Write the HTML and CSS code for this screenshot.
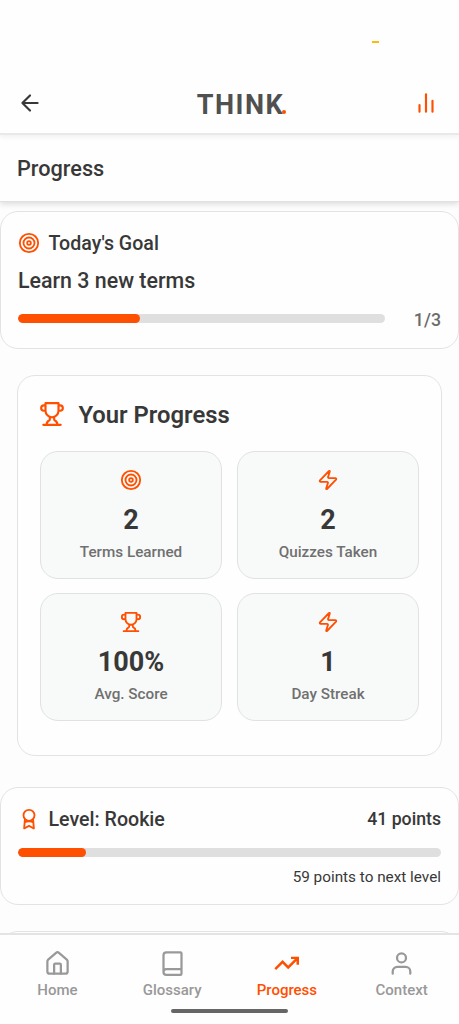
FILE: index.html
```html
<!DOCTYPE html>
<html lang="en">
<head>
<meta charset="utf-8">
<meta name="viewport" content="width=device-width, initial-scale=1">
<title>Progress</title>
<link rel="stylesheet" href="styles.css">
</head>
<body>
<svg class="defs" aria-hidden="true">
  <symbol id="target" viewBox="0 0 24 24"><circle cx="12" cy="12" r="10"/><circle cx="12" cy="12" r="6"/><circle cx="12" cy="12" r="2"/></symbol>
  <symbol id="trophy" viewBox="0 0 24 24"><path d="M6 9H4.500a2.500 2.500 0 0 1 0-5H6M18 9h1.500a2.500 2.500 0 0 0 0-5H18M4 22h16M10 14.660V17c0 .550-.470.980-.970 1.210C7.850 18.750 7 20.240 7 22M14 14.660V17c0 .550.470.980.970 1.210C16.150 18.750 17 20.240 17 22M18 2H6v7a6 6 0 0 0 12 0V2Z"/></symbol>
  <symbol id="zap" viewBox="0 0 24 24"><path d="M4 14a1 1 0 0 1-.78-1.630l9.900-10.200a.5.5 0 0 1 .860.460l-1.920 6.020A1 1 0 0 0 13 10h7a1 1 0 0 1 .780 1.630l-9.900 10.200a.5.5 0 0 1-.860-.460l1.920-6.020A1 1 0 0 0 11 14z"/></symbol>
  <symbol id="award" viewBox="0 0 24 24"><circle cx="12" cy="8" r="6"/><path d="M7.500 12.500L6.700 22.300l5.300-2.800 5.300 2.800-.8-9.800M7.500 15.500c2-1.400 7-1.400 9 0"/></symbol>
</svg>
<div class="screen">
  <header class="topbar">
    <svg class="icon back" viewBox="0 0 24 24"><path d="M12 19l-7-7 7-7M19 12H5"/></svg>
    <div class="logo">THINK<span class="logo-dot"></span></div>
    <svg class="icon chart" viewBox="0 0 24 24"><path d="M18 20V10M12 20V4M6 20v-6"/></svg>
    <span class="status-mark"></span>
  </header>
  <div class="subheader"><h1>Progress</h1></div>
  <main class="content">
    <section class="card goal">
      <h2 class="card-title"><svg class="icon"><use href="#target"/></svg><span>Today's Goal</span></h2>
      <p class="goal-text">Learn 3 new terms</p>
      <div class="goal-progress">
        <div class="track"><div class="fill" style="width:33.33%"></div></div>
        <span class="count">1/3</span>
      </div>
    </section>
    <section class="card overview">
      <h2 class="overview-title"><svg class="icon"><use href="#trophy"/></svg><span>Your Progress</span></h2>
      <div class="stats">
        <div class="stat"><svg class="icon"><use href="#target"/></svg><strong>2</strong><span>Terms Learned</span></div>
        <div class="stat"><svg class="icon"><use href="#zap"/></svg><strong>2</strong><span>Quizzes Taken</span></div>
        <div class="stat"><svg class="icon"><use href="#trophy"/></svg><strong>100%</strong><span>Avg. Score</span></div>
        <div class="stat"><svg class="icon"><use href="#zap"/></svg><strong>1</strong><span>Day Streak</span></div>
      </div>
    </section>
    <section class="card level">
      <div class="level-head">
        <h2 class="card-title"><svg class="icon"><use href="#award"/></svg><span>Level: Rookie</span></h2>
        <span class="points">41 points</span>
      </div>
      <div class="track"><div class="fill" style="width:16%"></div></div>
      <p class="next">59 points to next level</p>
    </section>
    <section class="card upcoming"></section>
  </main>
  <nav class="tabs">
    <a class="tab"><svg class="icon" viewBox="0 0 24 24"><path d="M15 21v-8a1 1 0 0 0-1-1h-4a1 1 0 0 0-1 1v8"/><path d="M3 10a2 2 0 0 1 .709-1.528l7-6a2 2 0 0 1 2.582 0l7 6A2 2 0 0 1 21 10v9a2 2 0 0 1-2 2H5a2 2 0 0 1-2-2z"/></svg><span>Home</span></a>
    <a class="tab"><svg class="icon" viewBox="0 0 24 24"><path d="M4 19.500v-15A2.500 2.500 0 0 1 6.500 2H19a1 1 0 0 1 1 1v18a1 1 0 0 1-1 1H6.500a2.500 2.500 0 0 1 0-5H20"/></svg><span>Glossary</span></a>
    <a class="tab active"><svg class="icon trend" viewBox="0 0 24 24"><path d="M22 7l-8.500 8.500-5-5L2 17M16 7h6v6"/></svg><span>Progress</span></a>
    <a class="tab"><svg class="icon" viewBox="0 0 24 24"><circle cx="12" cy="7" r="4"/><path d="M4.200 21v-2a4 4 0 0 1 4-4h7.600a4 4 0 0 1 4 4v2"/></svg><span>Context</span></a>
    <span class="home-indicator"></span>
  </nav>
</div>
</body>
</html>
```

FILE: styles.css
```css
* { box-sizing: border-box; }
body { margin: 0; font-family: Roboto, "Liberation Sans", sans-serif; color: #383838; background: #fdfdfd; }
h1, h2, p { margin: 0; font-weight: 500; }
.defs { display: none; }
.icon { width: 22px; height: 22px; flex: none; fill: none; stroke: currentColor; stroke-width: 2; stroke-linecap: round; stroke-linejoin: round; }
.screen { height: 1024px; display: flex; flex-direction: column; overflow: hidden; }
.topbar { position: relative; z-index: 2; flex: none; height: 135px; padding: 73px 20px 0 17px; display: grid; grid-template-columns: 26px 1fr 26px; align-items: center; background: #fefefe; border-bottom: 2px solid #e9e9e9; box-shadow: 0 2px 5px rgba(0,0,0,.06); }
.topbar .icon { width: 26px; height: 26px; }
.topbar .chart { color: #ff4f00; }
.logo { justify-self: center; display: flex; align-items: baseline; margin: 3px 0 0 27px; font-size: 27px; font-weight: 700; line-height: 32px; letter-spacing: 1.5px; color: #505050; }
.logo-dot { width: 4px; height: 4px; margin-left: -2px; border-radius: 50%; background: #ff4f00; }
.status-mark { position: absolute; left: 372px; top: 41px; width: 7px; height: 2px; background: #fbbc05; }
.subheader { position: relative; z-index: 1; flex: none; height: 67px; padding: 2px 17px 0; display: flex; align-items: center; background: #fefefe; border-bottom: 1px solid #e0e0e0; box-shadow: 0 2px 6px rgba(0,0,0,.14); }
.subheader h1 { font-size: 21.700px; line-height: 30px; }
.content { flex: 1; min-height: 0; overflow: hidden; padding-top: 9px; display: flex; flex-direction: column; }
.card { flex: none; border: 1px solid #e3e3e3; border-radius: 18px; background: #fefefe; }
.goal { height: 138px; padding: 20px 17px 0; }
.card-title { display: flex; align-items: center; gap: 8.500px; height: 22px; font-size: 19.600px; }
.card-title .icon, .overview-title .icon, .stat .icon { color: #ff4f00; }
.goal-text { margin-top: 13px; font-size: 21.400px; line-height: 28px; font-weight: 500; }
.goal-progress { margin-top: 12px; display: flex; align-items: center; justify-content: space-between; height: 22px; }
.track { height: 9px; border-radius: 5px; background: #dfdfdf; overflow: hidden; }
.fill { height: 100%; border-radius: 5px; background: #ff4f00; }
.goal-progress .track { width: 367px; }
.count { padding-top: 3px; font-size: 17.800px; font-weight: 500; color: #6b6b6b; }
.overview { margin: 26px 17px 0; height: 381px; padding: 25px 22px 0; }
.overview-title { display: flex; align-items: center; gap: 13px; height: 27px; font-size: 23.800px; font-weight: 600; }
.overview-title .icon { width: 26px; height: 26px; margin: -2px 0 0 -1px; }
.overview-title span { margin-left: .5px; }
.stats { margin-top: 23px; display: grid; grid-template-columns: repeat(2, 182px); justify-content: space-between; row-gap: 14px; }
.stat { height: 128px; padding-top: 17px; border: 1px solid #e0e2e2; border-radius: 18px; background: #f8faf9; display: flex; flex-direction: column; align-items: center; }
.stat strong { margin-top: 12px; font-size: 27px; line-height: 34px; font-weight: 700; }
.stat span { margin-top: 5px; font-size: 15.250px; line-height: 20px; font-weight: 500; color: #707070; }
.level { margin-top: 31px; height: 118px; padding: 20px 17px 0; }
.level-head { display: flex; justify-content: space-between; align-items: center; height: 22px; }
.points { font-size: 17.700px; font-weight: 500; }
.level .track { margin-top: 18px; }
.next { margin-top: 10px; text-align: right; font-size: 15.300px; line-height: 20px; font-weight: 400; }
.upcoming { margin-top: 26px; height: 100px; }
.tabs { position: relative; flex: none; height: 91px; padding-top: 15px; border-top: 2px solid #e4e4e4; background: #fefefe; display: grid; grid-template-columns: repeat(4, 1fr); align-items: start; }
.tab { display: flex; flex-direction: column; align-items: center; gap: 3px; color: #999; font-size: 15px; line-height: 20px; font-weight: 500; }
.tab .icon { width: 27px; height: 27px; }
.tab .trend { stroke-width: 2.200; stroke-linecap: butt; stroke-linejoin: miter; }
.active { color: #ff4f00; }
.home-indicator { position: absolute; left: 171px; top: 74px; width: 117px; height: 4px; border-radius: 2px; background: #666; }
```
